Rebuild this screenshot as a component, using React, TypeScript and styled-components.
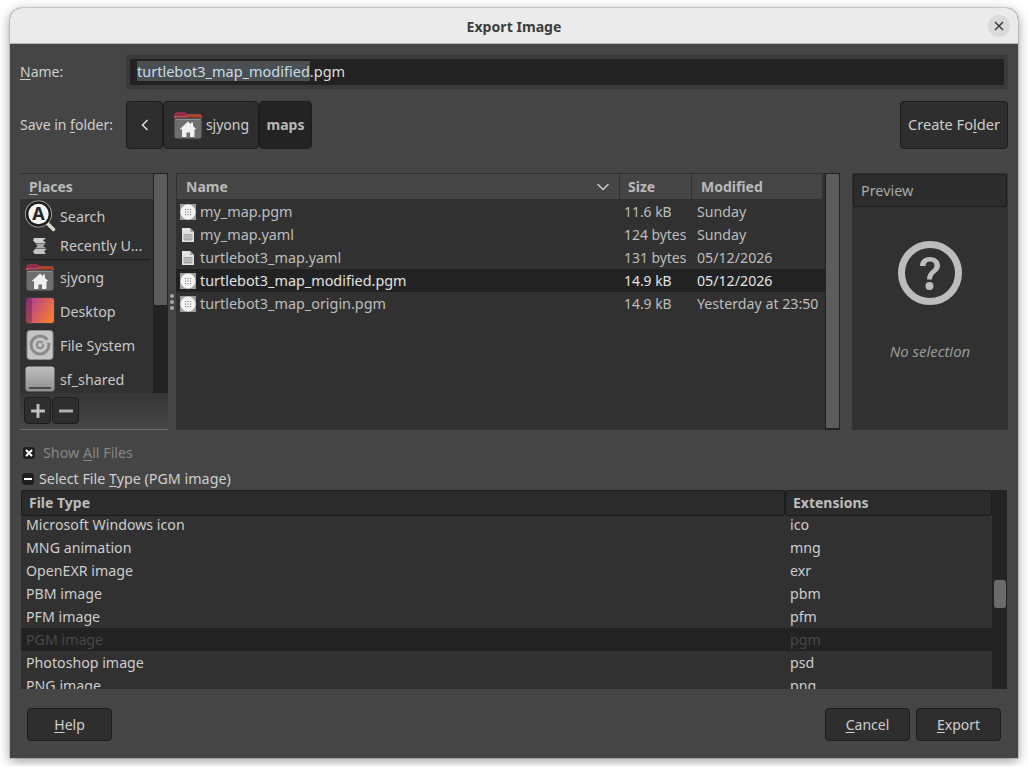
import React from "react";
import styled, { createGlobalStyle } from "styled-components";

const GlobalStyle = createGlobalStyle`
  html, body {
    margin: 0;
    background: #fff;
    overflow: hidden;
  }
  body {
    font-family: "Noto Sans", "Open Sans", sans-serif;
    font-size: 14px;
    color: #d6d6d6;
  }
  u {
    text-underline-offset: 2px;
  }
`;

const Dialog = styled.div`
  width: 1008px;
  height: 750px;
  margin: 8px 10px;
  display: flex;
  flex-direction: column;
  background: #454545;
  border-radius: 12px 12px 0 0;
  box-shadow: 0 3px 12px rgba(0, 0, 0, 0.4), 0 0 0 1px rgba(0, 0, 0, 0.12);
  overflow: hidden;
`;

const TitleBar = styled.header`
  height: 36px;
  box-sizing: border-box;
  flex: none;
  display: flex;
  align-items: center;
  justify-content: center;
  position: relative;
  padding-top: 1px;
  background: #ebebeb;
  border-bottom: 1px solid #b8b8b8;
  color: #3d3d3d;
  font-weight: 700;
  font-size: 14.1px;
`;

const CloseButton = styled.div`
  position: absolute;
  right: 8px;
  top: 7px;
  width: 22px;
  height: 22px;
  border-radius: 50%;
  background: #dadada;
  display: flex;
  align-items: center;
  justify-content: center;
`;

const Content = styled.main`
  flex: 1;
  display: flex;
  flex-direction: column;
  padding: 11px 10px 0;
`;

const NameRow = styled.div`
  display: flex;
  align-items: center;
  height: 34px;
`;

const RowLabel = styled.label`
  width: 106px;
  flex: none;
  padding-bottom: 2px;
  color: #cfcfcf;
`;

const NameFrame = styled.div`
  flex: 1;
  padding: 4px;
  background: #3a3a3a;
`;

const NameInput = styled.div`
  height: 26px;
  line-height: 25px;
  padding-left: 7px;
  background: #222;
  color: #dcdcdc;
  font-size: 14.5px;
`;

const Selected = styled.span`
  background: #4b4f52;
  color: #c6dcea;
`;

const FolderRow = styled.div`
  display: flex;
  align-items: center;
  height: 48px;
  margin-top: 12px;
`;

const PathBar = styled.div`
  display: flex;
`;

const PathButton = styled.div<{ $current?: boolean; $w: number }>`
  width: ${(p) => p.$w}px;
  height: 48px;
  box-sizing: border-box;
  display: flex;
  align-items: center;
  justify-content: center;
  gap: 3px;
  padding-bottom: 1px;
  border: 1px solid #1d1d1d;
  border-radius: 4px;
  background: ${(p) => (p.$current ? "#232323" : "#2e2e2e")};
  font-weight: ${(p) => (p.$current ? 700 : 400)};
  color: ${(p) => (p.$current ? "#b8b8b8" : "#cfcfcf")};
`;

const CreateFolderButton = styled.div`
  margin-left: auto;
  width: 108px;
  height: 48px;
  box-sizing: border-box;
  display: flex;
  align-items: center;
  justify-content: center;
  padding-bottom: 2px;
  border: 1px solid #1d1d1d;
  border-radius: 4px;
  background: #2e2e2e;
  color: #cfcfcf;
  font-size: 14.6px;
  white-space: nowrap;
`;

const Panes = styled.section`
  display: flex;
  height: 257px;
  margin-top: 24px;
`;

const PlacesPane = styled.div`
  width: 148px;
  flex: none;
  display: flex;
  flex-direction: column;
`;

const PlacesTop = styled.div`
  height: 220px;
  display: flex;
`;

const PlacesList = styled.div`
  flex: 1;
  background: #313131;
  overflow: hidden;
`;

const ColumnHeader = styled.div<{ $w?: number; $pad?: number }>`
  box-sizing: border-box;
  height: 25px;
  margin-top: 1px;
  display: flex;
  align-items: center;
  justify-content: space-between;
  width: ${(p) => (p.$w ? `${p.$w}px` : "auto")};
  flex: ${(p) => (p.$w ? "none" : 1)};
  padding: 0 ${(p) => p.$pad ?? 9}px;
  background: #454545;
  font-weight: 700;
  color: #b9b9b9;
`;

const PlaceRow = styled.div<{ $h: number }>`
  height: ${(p) => p.$h}px;
  display: flex;
  align-items: center;
  flex: none;
`;

const PlaceIcon = styled.div`
  width: 40px;
  flex: none;
  display: flex;
  justify-content: center;
`;

const PlaceName = styled.span`
  color: #c8c8c8;
  font-size: 14.3px;
  white-space: nowrap;
`;

const PlaceSep = styled.div`
  height: 1px;
  margin: 1px 3px 0;
  background: #1c1c1c;
`;

const ScrollTrack = styled.div`
  width: 15px;
  flex: none;
  background: #232323;
  box-sizing: border-box;
  border: 1px solid #232323;
  border-bottom: 0;
`;

const ScrollThumb = styled.div<{ $h: number }>`
  height: ${(p) => p.$h}px;
  background: #5c5c5c;
  border-radius: 1px;
`;

const PlacesBar = styled.div`
  flex: 1;
  display: flex;
  gap: 1px;
  padding: 4px 0 0 4px;
  background: linear-gradient(#363636, #454545);
  border-bottom: 1px solid #6a6a6a;
`;

const SmallButton = styled.div`
  width: 27px;
  height: 27px;
  box-sizing: border-box;
  display: flex;
  align-items: center;
  justify-content: center;
  border: 1px solid #1d1d1d;
  border-radius: 4px;
  background: #2e2e2e;
`;

const PaneHandle = styled.div`
  width: 8px;
  flex: none;
  display: flex;
  flex-direction: column;
  align-items: center;
  justify-content: center;
  gap: 2px;
  & > i {
    width: 4px;
    height: 4px;
    border-radius: 50%;
    background: #a8a8a8;
  }
`;

const FilesPane = styled.div`
  width: 664px;
  flex: none;
  display: flex;
  background: #313131;
`;

const FilesMain = styled.div`
  flex: 1;
  overflow: hidden;
`;

const FilesHeader = styled.div`
  display: flex;
  gap: 1px;
  padding-left: 1px;
  margin-bottom: 1px;
`;

const FileRow = styled.div<{ $selected?: boolean }>`
  display: flex;
  align-items: center;
  height: 23px;
  background: ${(p) => (p.$selected ? "#222" : "transparent")};
  color: ${(p) => (p.$selected ? "#e2e2e2" : "#bdbdbd")};
`;

const FileNameCell = styled.div`
  width: 449px;
  flex: none;
  display: flex;
  align-items: center;
  gap: 4px;
  padding-left: 4px;
  box-sizing: border-box;
  font-size: 14.4px;
`;

const SizeCell = styled.div`
  width: 72px;
  flex: none;
  padding-left: 0;
  margin-left: -1px;
  margin-right: 1px;
  font-size: 13.9px;
  white-space: nowrap;
`;

const DateCell = styled.div`
  flex: 1;
  font-size: 14.2px;
  white-space: nowrap;
`;

const PreviewPane = styled.aside`
  width: 156px;
  flex: none;
  margin-left: 12px;
  display: flex;
  flex-direction: column;
  align-items: center;
  background: #313131;
`;

const PreviewHeader = styled.div`
  align-self: stretch;
  height: 33px;
  margin: 1px 1px 0;
  box-sizing: border-box;
  display: flex;
  align-items: center;
  padding-left: 7px;
  background: #2c2c2c;
  border: 1px solid #1d1d1d;
  border-radius: 3px;
  color: #a8a8a8;
  font-size: 14.4px;
`;

const PreviewIcon = styled.div`
  margin-top: 34px;
  height: 64px;
`;

const PreviewText = styled.div`
  margin-top: 36px;
  font-style: italic;
  font-size: 14.9px;
  color: #989898;
`;

const OptionRow = styled.div<{ $top: number; $dim?: boolean; $gap: number; $left: number }>`
  height: 20px;
  margin-top: ${(p) => p.$top}px;
  padding-left: ${(p) => p.$left}px;
  display: flex;
  align-items: center;
  gap: ${(p) => p.$gap}px;
  font-size: 14.3px;
  color: ${(p) => (p.$dim ? "#868686" : "#cfcfcf")};
  & > span {
    padding-bottom: 2px;
  }
`;

const CheckBox = styled.div`
  width: 12px;
  height: 12px;
  display: flex;
  align-items: center;
  justify-content: center;
  border-radius: 3px;
  background: #1f1f1f;
`;

const TypeTable = styled.div`
  height: 199px;
  margin: 1px 1px 0;
  display: flex;
  background: #313131;
`;

const TypeMain = styled.div`
  flex: 1;
  display: flex;
  flex-direction: column;
  overflow: hidden;
`;

const TypeHeader = styled.div`
  display: flex;
  flex: none;
  height: 26px;
  position: relative;
  z-index: 1;
`;

const TypeHeaderCell = styled.div<{ $w: number; $pad: number }>`
  width: ${(p) => p.$w}px;
  box-sizing: border-box;
  flex: none;
  display: flex;
  align-items: center;
  padding: 0 0 2px ${(p) => p.$pad}px;
  background: #2b2b2b;
  border: 1px solid #1b1b1b;
  border-radius: 3px;
  font-weight: 700;
  color: #bdbdbd;
`;

const TypeRows = styled.div`
  flex: 1;
  overflow: hidden;
  & > div:first-child {
    margin-top: -3px;
  }
`;

const TypeRow = styled.div<{ $selected?: boolean }>`
  display: flex;
  align-items: center;
  height: 23px;
  font-size: 14.2px;
  background: ${(p) => (p.$selected ? "#222" : "transparent")};
  color: ${(p) => (p.$selected ? "#484848" : "#cdcdcd")};
`;

const TypeName = styled.div`
  width: 769px;
  flex: none;
  padding-left: 5px;
  box-sizing: border-box;
`;

const TypeScroll = styled.div`
  width: 15px;
  flex: none;
  background: #232323;
  padding: 90px 1px 0 2px;
  box-sizing: border-box;
`;

const TypeThumb = styled.div`
  height: 28px;
  border-radius: 3px;
  background: #6b6b6b;
`;

const Footer = styled.footer`
  display: flex;
  gap: 6px;
  margin-top: 19px;
  padding: 0 7px;
`;

const ActionButton = styled.div<{ $push?: boolean }>`
  width: 85px;
  height: 33px;
  box-sizing: border-box;
  display: flex;
  align-items: center;
  justify-content: center;
  margin-right: ${(p) => (p.$push ? "auto" : 0)};
  border: 1px solid #1d1d1d;
  border-radius: 4px;
  background: #2e2e2e;
  color: #cfcfcf;
`;

const HomeFolderIcon = () => (
  <svg width="30" height="30" viewBox="0 0 30 30">
    <path d="M1 6a4 4 0 0 1 4-4h7l2.500 2H26a3 3 0 0 1 3 3v6H1z" fill="#8f2f47" />
    <path d="M14 4h12a3 3 0 0 1 3 3v3H14z" fill="#a9432e" />
    <path d="M1 6h11l2-1v3H1z" fill="#b8505f" />
    <rect x="1" y="8" width="28" height="21" rx="3" fill="#6e6e6e" stroke="#353535" />
    <rect x="2" y="9" width="26" height="1" fill="#8f8f8f" />
    <path d="M15 11.500l3 2.700v-1.700h2v3.500l3.500 3.200H21.500V27h-4.500v-4.500h-3.500V27H9v-7.800H6.500z" fill="#f0f0f0" />
  </svg>
);

const SearchIcon = () => (
  <svg width="32" height="32" viewBox="0 0 32 32">
    <path d="M21 21l8.500 8.500" stroke="#dedbd0" strokeWidth="3.500" strokeLinecap="round" />
    <circle cx="14.500" cy="14" r="13.500" fill="#bdb9ae" />
    <circle cx="14.500" cy="14" r="12.700" fill="#1d1d1d" />
    <circle cx="14.500" cy="14" r="10.200" fill="#f4f4f0" />
    <text x="14.500" y="20" textAnchor="middle" fontFamily="'Noto Sans', sans-serif" fontWeight="700" fontSize="18" fill="#262626">
      A
    </text>
  </svg>
);

const RecentIcon = () => (
  <svg width="16" height="18" viewBox="0 0 16 18">
    <path d="M2 1h12l-3 2.500 3 2.500H3.500L1 3.500z" fill="#cfcfcf" />
    <path d="M3.500 6.500H14l-3 2.500 3.500 2.500H3L5.500 9z" fill="#a8a8a8" />
    <path d="M3 12h11.500l-2.500 2.500 2 2.500H2.500l-1.500-2.500z" fill="#c2c2c2" />
  </svg>
);

const DesktopIcon = () => (
  <svg width="30" height="28" viewBox="0 0 30 28">
    <defs>
      <linearGradient id="desk" x1="0" y1="0" x2="1" y2="0.6">
        <stop offset="0" stopColor="#a8369a" />
        <stop offset="1" stopColor="#f47a35" />
      </linearGradient>
    </defs>
    <rect x="0.5" y="0.5" width="29" height="26" rx="3" fill="url(#desk)" stroke="#3a3a3a" />
    <rect x="1" y="1" width="6" height="25" rx="2" fill="#000" opacity=".22" />
  </svg>
);

const DiskIcon = () => (
  <svg width="28" height="30" viewBox="0 0 28 30">
    <rect x="1" y="0.5" width="26" height="29" rx="3" fill="#c4c4c4" stroke="#8c8c8c" />
    <circle cx="14" cy="15" r="9" fill="none" stroke="#8a8a8a" strokeWidth="3" />
    <circle cx="14" cy="15" r="3.200" fill="none" stroke="#8a8a8a" strokeWidth="2" />
    <path d="M14 15L25 7l1 5z" fill="#c4c4c4" />
  </svg>
);

const DriveIcon = () => (
  <svg width="30" height="26" viewBox="0 0 30 26">
    <defs>
      <linearGradient id="drive" x1="0" y1="0" x2="0" y2="1">
        <stop offset="0" stopColor="#c0c0c0" />
        <stop offset="1" stopColor="#8e8e8e" />
      </linearGradient>
    </defs>
    <rect x="0.5" y="0.5" width="29" height="25" rx="3" fill="url(#drive)" />
    <rect x="4" y="21" width="22" height="2" fill="#4a4a4a" />
  </svg>
);

const ImageFileIcon = () => (
  <svg width="16" height="16" viewBox="0 0 16 16">
    <rect width="16" height="16" fill="#9e9e9e" />
    <circle cx="8" cy="8" r="7.500" fill="#f4f4f4" />
    {[5, 7.5, 10].map((y) =>
      [5, 7.5, 10].map((x) => <rect key={`${x}-${y}`} x={x} y={y} width="1.200" height="1.200" fill="#8a8a8a" />)
    )}
  </svg>
);

const TextFileIcon = () => (
  <svg width="16" height="16" viewBox="0 0 16 16">
    <path d="M2 1h8l4 4v10H2z" fill="#e4e4e4" />
    <path d="M10 1l4 4h-4z" fill="#aaa" />
    <rect x="3.500" y="7" width="9" height="6.500" rx="1" fill="#a6a6a6" />
    <path d="M3.500 9h9M3.500 11h9" stroke="#d8d8d8" strokeWidth="0.700" />
  </svg>
);

const QuestionIcon = () => (
  <svg width="64" height="64" viewBox="0 0 64 64">
    <circle cx="32" cy="32" r="28.500" fill="none" stroke="#bdbdbd" strokeWidth="7" />
    <path d="M22 25c0-6 4.500-9 10-9s10 3.500 10 8.500c0 7-8 7-8 14h-5c0-9 7.500-9 7.500-14 0-2.500-2-4-4.500-4-3 0-4.500 2-4.500 4.500z" fill="#bdbdbd" />
    <circle cx="31.500" cy="45" r="4" fill="#bdbdbd" />
  </svg>
);

const PlusIcon = () => (
  <svg width="16" height="16" viewBox="0 0 16 16">
    <path d="M6.500 1h3v5.500H15v3H9.500V15h-3V9.500H1v-3h5.500z" fill="#b4b4b4" />
    <path d="M8 2v12M2 8h12" stroke="#dcdcdc" strokeWidth="1" strokeDasharray="1 1" />
  </svg>
);

const MinusIcon = () => (
  <svg width="16" height="16" viewBox="0 0 16 16">
    <rect x="1" y="6.500" width="14" height="3" fill="#a8a8a8" />
    <path d="M2 8h12" stroke="#cfcfcf" strokeWidth="1" strokeDasharray="1 1" />
  </svg>
);

const files = [
  { name: "my_map.pgm", size: "11.6 kB", date: "Sunday", image: true },
  { name: "my_map.yaml", size: "124 bytes", date: "Sunday", image: false },
  { name: "turtlebot3_map.yaml", size: "131 bytes", date: "05/12/2026", image: false },
  { name: "turtlebot3_map_modified.pgm", size: "14.9 kB", date: "05/12/2026", image: true, selected: true },
  { name: "turtlebot3_map_origin.pgm", size: "14.9 kB", date: "Yesterday at 23:50", image: true },
];

const fileTypes = [
  ["Microsoft Windows icon", "ico"],
  ["MNG animation", "mng"],
  ["OpenEXR image", "exr"],
  ["PBM image", "pbm"],
  ["PFM image", "pfm"],
  ["PGM image", "pgm"],
  ["Photoshop image", "psd"],
  ["PNG image", "png"],
];

export default function App() {
  return (
    <>
      <GlobalStyle />
      <Dialog>
        <TitleBar>
          Export Image
          <CloseButton>
            <svg width="10" height="10" viewBox="0 0 10 10">
              <path d="M1 1l8 8M9 1l-8 8" stroke="#333" strokeWidth="1.400" />
            </svg>
          </CloseButton>
        </TitleBar>
        <Content>
          <NameRow>
            <RowLabel>
              <u>N</u>ame:
            </RowLabel>
            <NameFrame>
              <NameInput>
                <Selected>turtlebot3_map_modified</Selected>.pgm
              </NameInput>
            </NameFrame>
          </NameRow>

          <FolderRow>
            <RowLabel>
              Save in <u>f</u>older:
            </RowLabel>
            <PathBar>
              <PathButton $w={37}>
                <svg width="10" height="14" viewBox="0 0 10 14">
                  <path d="M7.500 2L2.500 7l5 5" fill="none" stroke="#e0e0e0" strokeWidth="1.500" />
                </svg>
              </PathButton>
              <PathButton $w={96}>
                <HomeFolderIcon />
                sjyong
              </PathButton>
              <PathButton $w={53} $current>
                maps
              </PathButton>
            </PathBar>
            <CreateFolderButton>
              <span>
                Create Fo<u>l</u>der
              </span>
            </CreateFolderButton>
          </FolderRow>

          <Panes>
            <PlacesPane>
              <PlacesTop>
                <PlacesList>
                  <ColumnHeader>
                    <span>
                      <u>P</u>laces
                    </span>
                  </ColumnHeader>
                  <PlaceRow $h={34}>
                    <PlaceIcon>
                      <SearchIcon />
                    </PlaceIcon>
                    <PlaceName>Search</PlaceName>
                  </PlaceRow>
                  <PlaceRow $h={25}>
                    <PlaceIcon>
                      <RecentIcon />
                    </PlaceIcon>
                    <PlaceName>Recently U...</PlaceName>
                  </PlaceRow>
                  <PlaceSep />
                  <PlaceRow $h={34}>
                    <PlaceIcon>
                      <HomeFolderIcon />
                    </PlaceIcon>
                    <PlaceName>sjyong</PlaceName>
                  </PlaceRow>
                  <PlaceRow $h={34}>
                    <PlaceIcon>
                      <DesktopIcon />
                    </PlaceIcon>
                    <PlaceName>Desktop</PlaceName>
                  </PlaceRow>
                  <PlaceRow $h={34}>
                    <PlaceIcon>
                      <DiskIcon />
                    </PlaceIcon>
                    <PlaceName>File System</PlaceName>
                  </PlaceRow>
                  <PlaceRow $h={34}>
                    <PlaceIcon>
                      <DriveIcon />
                    </PlaceIcon>
                    <PlaceName>sf_shared</PlaceName>
                  </PlaceRow>
                </PlacesList>
                <ScrollTrack>
                  <ScrollThumb $h={131} />
                </ScrollTrack>
              </PlacesTop>
              <PlacesBar>
                <SmallButton>
                  <PlusIcon />
                </SmallButton>
                <SmallButton>
                  <MinusIcon />
                </SmallButton>
              </PlacesBar>
            </PlacesPane>

            <PaneHandle>
              <i />
              <i />
              <i />
            </PaneHandle>

            <FilesPane>
              <FilesMain>
                <FilesHeader>
                  <ColumnHeader $w={442}>
                    Name
                    <svg width="14" height="10" viewBox="0 0 14 10">
                      <path d="M1.500 2l5.500 5.500L12.500 2" fill="none" stroke="#d0d0d0" strokeWidth="1.400" />
                    </svg>
                  </ColumnHeader>
                  <ColumnHeader $w={71} $pad={8}>
                    Size
                  </ColumnHeader>
                  <ColumnHeader $w={130} $pad={9}>
                    Modified
                  </ColumnHeader>
                </FilesHeader>
                {files.map((f) => (
                  <FileRow key={f.name} $selected={f.selected}>
                    <FileNameCell>
                      {f.image ? <ImageFileIcon /> : <TextFileIcon />}
                      {f.name}
                    </FileNameCell>
                    <SizeCell>{f.size}</SizeCell>
                    <DateCell>{f.date}</DateCell>
                  </FileRow>
                ))}
              </FilesMain>
              <ScrollTrack>
                <ScrollThumb $h={254} />
              </ScrollTrack>
            </FilesPane>

            <PreviewPane>
              <PreviewHeader>Preview</PreviewHeader>
              <PreviewIcon>
                <QuestionIcon />
              </PreviewIcon>
              <PreviewText>No selection</PreviewText>
            </PreviewPane>
          </Panes>

          <OptionRow $top={13} $dim $gap={8} $left={3}>
            <CheckBox>
              <svg width="8" height="8" viewBox="0 0 8 8">
                <path d="M1 1l6 6M7 1L1 7" stroke="#fff" strokeWidth="2" />
              </svg>
            </CheckBox>
            <span>
              Show <u>A</u>ll Files
            </span>
          </OptionRow>

          <OptionRow $top={6} $gap={5} $left={2}>
            <CheckBox>
              <svg width="8" height="8" viewBox="0 0 8 8">
                <path d="M0 4h8" stroke="#fff" strokeWidth="2" />
              </svg>
            </CheckBox>
            <span>
              Select File <u>T</u>ype (PGM image)
            </span>
          </OptionRow>

          <TypeTable>
            <TypeMain>
              <TypeHeader>
                <TypeHeaderCell $w={764} $pad={7}>
                  File Type
                </TypeHeaderCell>
                <TypeHeaderCell $w={207} $pad={7}>
                  Extensions
                </TypeHeaderCell>
              </TypeHeader>
              <TypeRows>
                {fileTypes.map(([name, ext]) => (
                  <TypeRow key={name} $selected={name === "PGM image"}>
                    <TypeName>{name}</TypeName>
                    <span>{ext}</span>
                  </TypeRow>
                ))}
              </TypeRows>
            </TypeMain>
            <TypeScroll>
              <TypeThumb />
            </TypeScroll>
          </TypeTable>

          <Footer>
            <ActionButton $push>
              <span>
                <u>H</u>elp
              </span>
            </ActionButton>
            <ActionButton>
              <span>
                <u>C</u>ancel
              </span>
            </ActionButton>
            <ActionButton>
              <span>
                <u>E</u>xport
              </span>
            </ActionButton>
          </Footer>
        </Content>
      </Dialog>
    </>
  );
}
